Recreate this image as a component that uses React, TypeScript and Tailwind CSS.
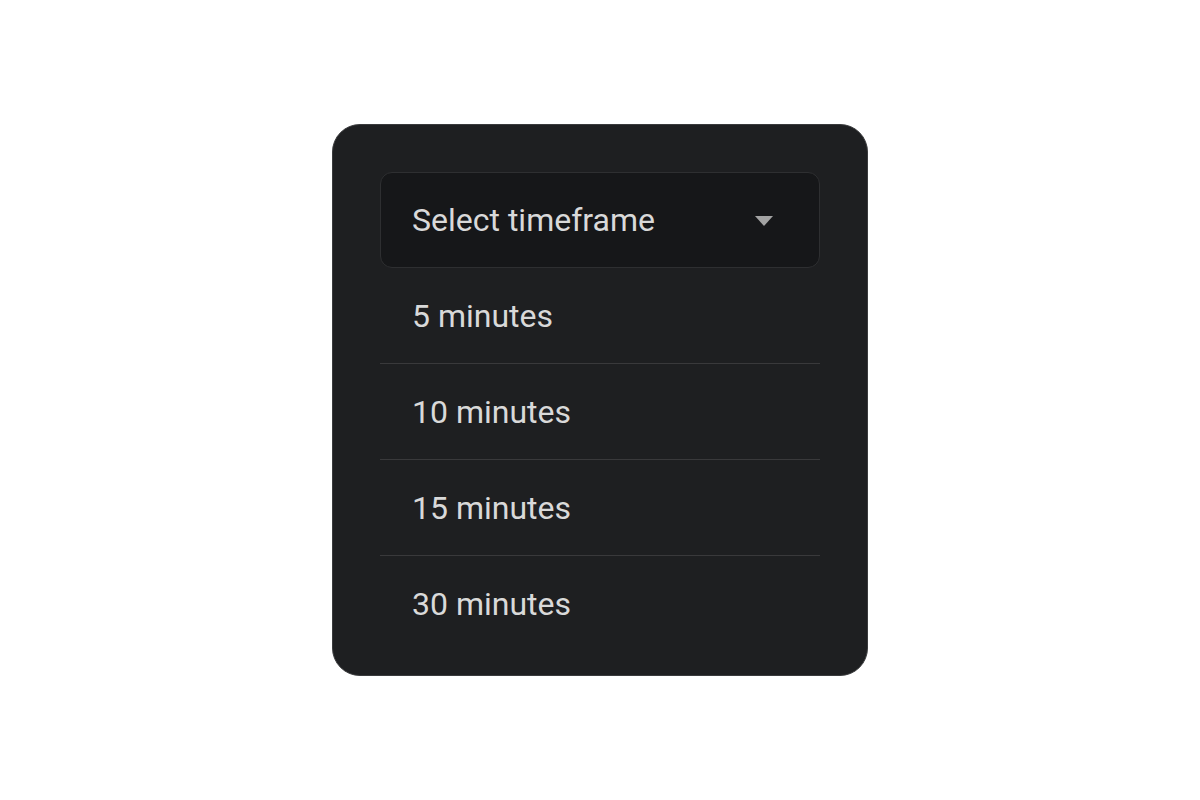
export default function App() {
  const options = ['5 minutes', '10 minutes', '15 minutes', '30 minutes']

  return (
    <div className="min-h-screen w-full bg-white flex items-center justify-center" style={{ fontFamily: 'Roboto, "Liberation Sans", sans-serif' }}>
      <div className="w-[536px] rounded-[28px] border border-[#3a3b3d] bg-[#1e1f21] pt-[47px] px-[47px] pb-[23px]">
        {/* select trigger */}
        <div className="h-24 flex items-center justify-between rounded-xl border border-[#2e2f31] bg-[#161719] pl-[31px] pr-[46px]">
          <span className="text-[32px] text-[#d9d9d9]">Select timeframe</span>
          <svg width="18" height="10" viewBox="0 0 18 10" className="mt-[2px]">
            <path d="M0 0h18L9 10z" fill="#a3a3a3" />
          </svg>
        </div>

        {/* options */}
        <ul>
          {options.map((o, i) => (
            <li
              key={o}
              className={
                i < options.length - 1
                  ? 'h-24 flex items-center pl-8 border-b border-[#39393b]'
                  : 'h-24 flex items-center pl-8 border-b border-transparent'
              }
            >
              <span className="text-[32px] text-[#d9d9d9]">{o}</span>
            </li>
          ))}
        </ul>
      </div>
    </div>
  )
}
